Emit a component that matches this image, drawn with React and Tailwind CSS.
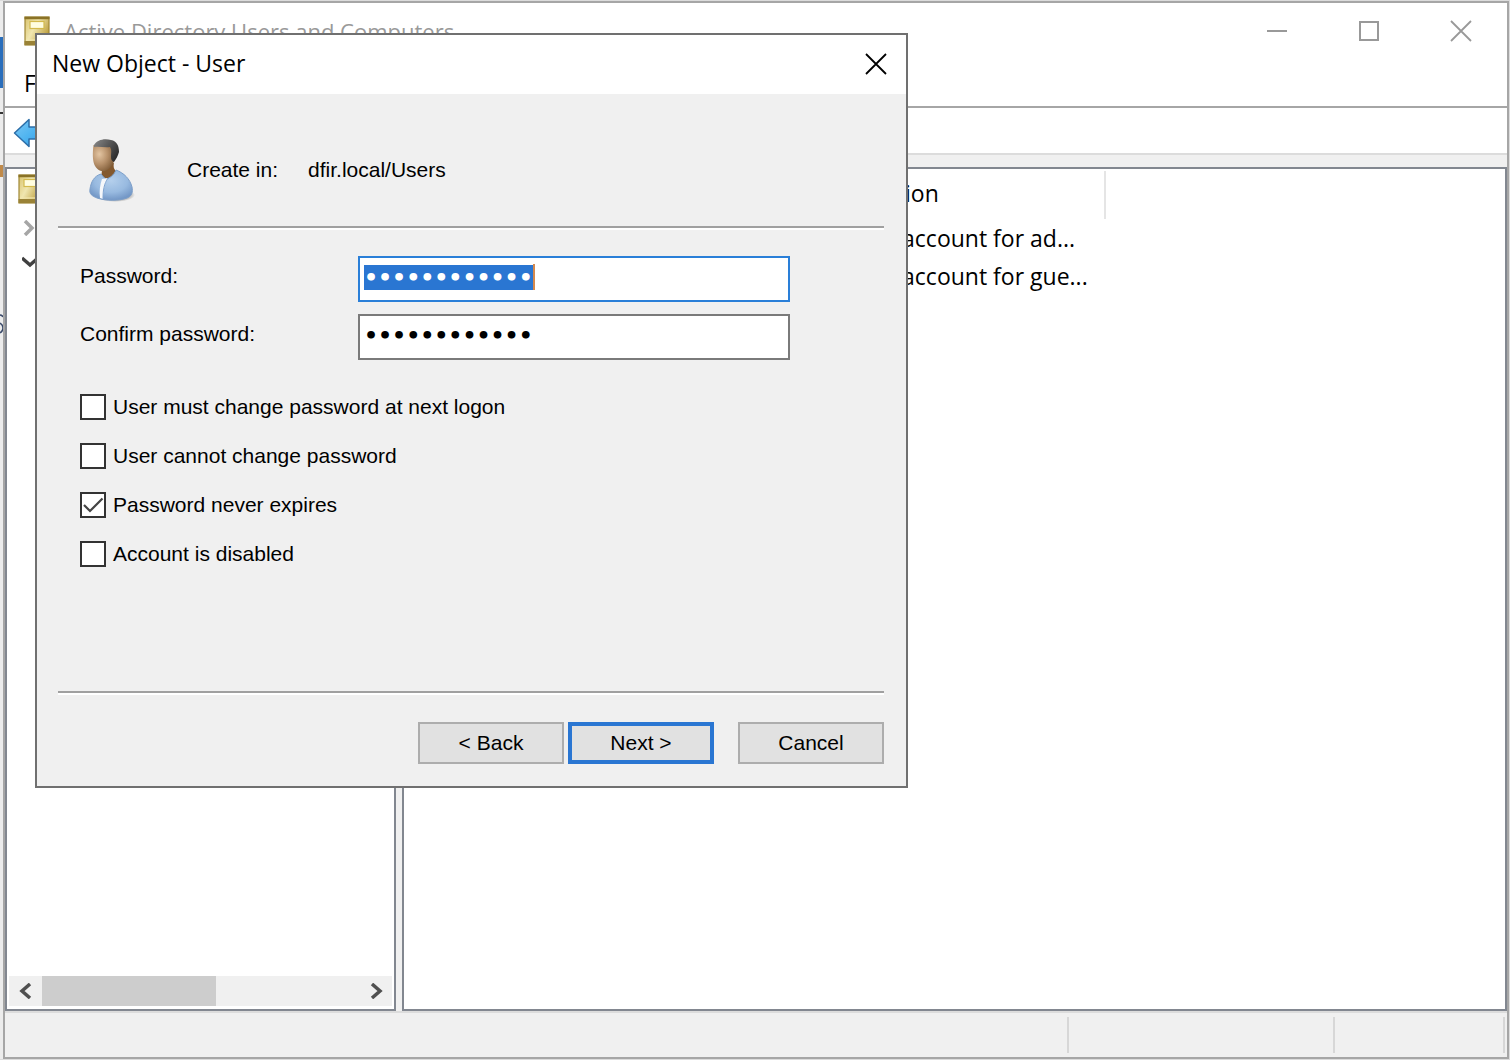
import React, { useEffect, useRef, useState } from 'react';

const OPTIONS = [
  { id: 'must-change', label: 'User must change password at next logon' },
  { id: 'cannot-change', label: 'User cannot change password' },
  { id: 'never-expires', label: 'Password never expires' },
  { id: 'disabled', label: 'Account is disabled' },
];

const ACCOUNTS = ['Built-in account for ad...', 'Built-in account for gue...'];

function BookIcon() {
  return (
    <svg viewBox="0 0 26 30" className="h-[30px] w-[26px] shrink-0" aria-hidden="true">
      <defs>
        <linearGradient id="book" x1="0" y1="0" x2="1" y2="0.6">
          <stop offset="0" stopColor="#d9c36c" />
          <stop offset="0.45" stopColor="#f0e6b0" />
          <stop offset="1" stopColor="#bb9c38" />
        </linearGradient>
      </defs>
      <rect x="1" y="1" width="24" height="28" fill="url(#book)" stroke="#a08836" strokeWidth="1.2" />
      <path d="M0.500 2h25" stroke="#8a7226" strokeWidth="2.500" />
      <path d="M0.500 25h25v4h-25z" fill="#9a8236" />
      <path d="M2 24h22" stroke="#f2e7ae" strokeWidth="1.200" />
      <rect x="6" y="5.500" width="14" height="7" fill="#fffde0" stroke="#d3b94c" strokeWidth="1.200" />
    </svg>
  );
}

function BackIcon() {
  return (
    <svg viewBox="0 0 36 30" className="h-[30px] w-9" aria-hidden="true">
      <defs>
        <linearGradient id="back" x1="0" y1="0" x2="1" y2="1">
          <stop offset="0" stopColor="#7cc8f5" />
          <stop offset="0.5" stopColor="#4fb4f0" />
          <stop offset="1" stopColor="#2f93de" />
        </linearGradient>
      </defs>
      <path d="M1.500 15L16 1.500v7.500h19v12h-19v7.500z" fill="url(#back)" stroke="#2c6ea8" strokeWidth="1.500" strokeLinejoin="round" />
    </svg>
  );
}

function UserIcon() {
  return (
    <svg viewBox="0 0 48 66" className="h-[66px] w-12" aria-hidden="true">
      <defs>
        <radialGradient id="face" cx="0.3" cy="0.35" r="0.75">
          <stop offset="0" stopColor="#e3c5a2" />
          <stop offset="0.5" stopColor="#b8926c" />
          <stop offset="1" stopColor="#7d5a36" />
        </radialGradient>
        <radialGradient id="coat" cx="0.5" cy="0.35" r="0.65">
          <stop offset="0" stopColor="#b4cfec" />
          <stop offset="0.6" stopColor="#98bae0" />
          <stop offset="1" stopColor="#7397c6" />
        </radialGradient>
        <linearGradient id="hair" x1="0" y1="0" x2="1" y2="0.6">
          <stop offset="0" stopColor="#8a8a8a" />
          <stop offset="0.5" stopColor="#5a5a5a" />
          <stop offset="1" stopColor="#2e2e2e" />
        </linearGradient>
        <radialGradient id="shadow">
          <stop offset="0.7" stopColor="#a8a8a8" />
          <stop offset="1" stopColor="#a8a8a8" stopOpacity="0" />
        </radialGradient>
      </defs>
      <ellipse cx="27" cy="58" rx="20" ry="7" fill="url(#shadow)" />
      <path d="M14 28c0 5 0 8-1 11l6 9 11-12c-4-3-5-6-4-10z" fill="#83592f" />
      <path d="M13 37c-7 2-10 8-11 15-1 5 2 7 7 9 9 3 22 3 30 0 5-2 6-6 5-11-2-8-8-14-16-17-2 5-6 8-10 9-2-1-3-3-5-5z" fill="url(#coat)" stroke="#7d9fc9" strokeWidth="1" />
      <path d="M14 42l6-1c-3 5-5 12-5 21l-3-1c-1-7 0-13 2-19z" fill="#f5f7fa" />
      <path d="M20 41c-4 6-5 12-5 21" fill="none" stroke="#7ea3d0" strokeWidth="1" />
      <path d="M5.500 8c-1 8-1 15 1 20 2 4 6 7 10 6 5-1 9-6 10-12V8z" fill="url(#face)" />
      <path d="M6 8C9 3 16 1 23 3c6 1 8 6 8 12-1 4-3 7-5 10-2-1-3-2-3-5 0-4 1-7-1-10-5 1-11-1-16 0z" fill="url(#hair)" />
    </svg>
  );
}

function CloseIcon() {
  return (
    <svg viewBox="0 0 24 24" className="size-6" fill="none" stroke="currentColor" strokeWidth="1.800" aria-hidden="true">
      <path d="M2 2l20 20M22 2L2 22" />
    </svg>
  );
}

function Chevron({ d, className }) {
  return (
    <svg viewBox="0 0 16 16" className={`size-4 ${className}`} fill="none" stroke="currentColor" strokeWidth="3.500" aria-hidden="true">
      <path d={d} />
    </svg>
  );
}

function TitleBar() {
  return (
    <header className="flex h-14 shrink-0 items-center pl-[19px]">
      <BookIcon />
      <h1 className="ml-3.5 flex-1 text-[22px] text-[#999]">Active Directory Users and Computers</h1>
      <div className="flex text-[#999]">
        <button type="button" aria-label="Minimize" className="flex h-14 w-[92px] items-center justify-center">
          <span className="h-0.5 w-5 bg-[#999]" />
        </button>
        <button type="button" aria-label="Maximize" className="flex h-14 w-[92px] items-center justify-center">
          <span className="size-5 border-2 border-[#999]" />
        </button>
        <button type="button" aria-label="Close" className="flex h-14 w-[92px] items-center justify-center">
          <CloseIcon />
        </button>
      </div>
    </header>
  );
}

function TreePane() {
  return (
    <aside className="flex w-[391px] shrink-0 flex-col border-2 border-[#828790] bg-white">
      <div className="flex flex-1 flex-col pl-[11px] pt-[5px]">
        <BookIcon />
        <div className="mt-4 flex flex-col gap-[18px] pl-1">
          <Chevron d="M3 1l7 7-7 7" className="text-[#a6a6a6]" />
          <Chevron d="M0 4l8 7 8-7" className="text-[#404040]" />
        </div>
      </div>
      <div className="mx-0.5 mb-[3px] flex h-[30px] items-center bg-[#f0f0f0]">
        <button type="button" aria-label="Scroll left" className="flex h-full w-[33px] items-center justify-center">
          <Chevron d="M12 1L4 8l8 7" className="text-[#505050]" />
        </button>
        <div className="h-full flex-1">
          <div className="h-full w-[174px] bg-[#cdcdcd]" />
        </div>
        <button type="button" aria-label="Scroll right" className="flex h-full w-[33px] items-center justify-center">
          <Chevron d="M4 1l8 7-8 7" className="text-[#505050]" />
        </button>
      </div>
    </aside>
  );
}

function ListPane() {
  return (
    <section className="min-w-0 flex-1 border-2 border-[#828790] bg-white pt-0.5">
      <table className="table-fixed border-collapse text-left text-[23px]">
        <thead>
          <tr className="h-[48px]">
            <th className="w-[412px]" />
            <th className="w-[289px] border-r-2 border-[#e5e5e5] pb-1 font-normal">Description</th>
          </tr>
        </thead>
        <tbody>
          {ACCOUNTS.map((text) => (
            <tr key={text} className="h-[38px]">
              <td />
              <td className="whitespace-nowrap pl-1">{text}</td>
            </tr>
          ))}
        </tbody>
      </table>
    </section>
  );
}

function PasswordRow({ id, label, value, onChange, inputRef, active }) {
  return (
    <div className="flex">
      <label htmlFor={id} className="w-[278px] pt-1.5 leading-7">{label}</label>
      <div className="relative">
        <input
          id={id}
          ref={inputRef}
          type="password"
          value={value}
          onChange={(e) => onChange(e.target.value)}
          className={`block h-[46px] w-[432px] border-2 bg-white pb-2.5 pl-1 pt-1.5 font-['DejaVu_Sans'] text-[22px] font-bold leading-[26px] outline-none selection:bg-[#2a76d2] selection:text-white ${active ? 'border-[#2a7fd8]' : 'border-[#7a7a7a]'}`}
        />
        {active && <span className="absolute left-[175px] top-2 h-[26px] w-0.5 bg-[#d5894d]" />}
      </div>
    </div>
  );
}

function NewUserDialog() {
  const [password, setPassword] = useState('Passw0rd!234');
  const [confirm, setConfirm] = useState('Passw0rd!234');
  const [checked, setChecked] = useState({ 'never-expires': true });
  const passwordRef = useRef(null);

  useEffect(() => {
    passwordRef.current.focus();
    passwordRef.current.select();
  }, []);

  return (
    <div role="dialog" aria-labelledby="dialog-title" className="absolute left-[35px] top-[33px] w-[873px] border-2 border-[#707070] bg-[#f0f0f0] text-black">
      <div className="flex h-[59px] items-center justify-between bg-white pb-0.5 pl-[15px] pr-[18px]">
        <h2 id="dialog-title" className="text-[23px]">New Object - User</h2>
        <button type="button" aria-label="Close"><CloseIcon /></button>
      </div>

      <form onSubmit={(e) => e.preventDefault()} className="flex flex-col pb-[22px] pl-[21px] pr-[22px] font-['Liberation_Sans',sans-serif] text-[21px]">
        <div className="flex h-[132px] items-center pl-[30px] pt-5">
          <UserIcon />
          <div className="ml-[51px] flex gap-[30px] leading-7">
            <span>Create in:</span>
            <span>dfir.local/Users</span>
          </div>
        </div>
        <div className="h-1 border-b-2 border-t-2 border-b-white border-t-[#a0a0a0]" />

        <div className="flex flex-col gap-3 pl-[22px] pt-[26px]">
          <PasswordRow id="password" label="Password:" value={password} onChange={setPassword} inputRef={passwordRef} active />
          <PasswordRow id="confirm" label="Confirm password:" value={confirm} onChange={setConfirm} />
        </div>

        <div className="mt-[33px] flex h-[298px] flex-col gap-[21px] pl-[22px]">
          {OPTIONS.map(({ id, label }) => (
            <div key={id} className="flex h-7 items-center gap-[7px] leading-7">
              <span className="grid size-[26px] place-items-center">
                <input
                  id={id}
                  type="checkbox"
                  checked={!!checked[id]}
                  onChange={(e) => setChecked({ ...checked, [id]: e.target.checked })}
                  className="peer col-start-1 row-start-1 size-[26px] appearance-none border-2 border-[#333] bg-white"
                />
                <svg viewBox="0 0 26 26" className="pointer-events-none invisible col-start-1 row-start-1 size-[26px] peer-checked:visible" fill="none" stroke="#444" strokeWidth="2.200" aria-hidden="true">
                  <path d="M4 13l6 6L22.500 6.500" />
                </svg>
              </span>
              <label htmlFor={id}>{label}</label>
            </div>
          ))}
        </div>

        <div className="h-1 border-b-2 border-t-2 border-b-white border-t-[#a0a0a0]" />
        <div className="mt-[27px] flex justify-end">
          <button type="button" className="h-[42px] w-[146px] border-2 border-[#adadad] bg-[#e1e1e1]">&lt; Back</button>
          <button type="submit" className="ml-1 h-[42px] w-[146px] border-4 border-[#2a76d2] bg-[#e1e1e1]">Next &gt;</button>
          <button type="button" className="ml-6 h-[42px] w-[146px] border-2 border-[#adadad] bg-[#e1e1e1]">Cancel</button>
        </div>
      </form>
    </div>
  );
}

export default function App() {
  return (
    <div className="relative flex h-screen overflow-hidden bg-[#dcdcdc] py-px pr-px font-['Open_Sans',sans-serif] text-black">
      {/* sliver of the window behind */}
      <div className="flex w-[3px] shrink-0 flex-col bg-[#ececec]">
        <div className="mt-9 h-[51px] bg-[#2a6ebb]" />
        <div className="mt-6 h-0.5 bg-[#333]" />
        <div className="mt-[51px] h-3 bg-[#c08a4a]" />
        <svg viewBox="0 0 3 20" className="mt-[137px] h-5 w-[3px]" fill="none" stroke="#3a4a6a" strokeWidth="1.500" aria-hidden="true">
          <path d="M0 1q2 0 3 2M0 9q3 2 3 5t-3 5" />
        </svg>
      </div>

      <main className="flex min-w-0 flex-1 flex-col border-2 border-[#a6a6a6] bg-white">
        <TitleBar />
        <nav className="flex h-[49px] shrink-0 items-center border-b-2 border-[#a6a6a6] pl-[19px] pt-0.5 text-[23px]">
          <button type="button">File</button>
        </nav>
        <div className="flex h-[45px] shrink-0 items-center pl-2 pt-1">
          <button type="button" aria-label="Back"><BackIcon /></button>
        </div>
        <div className="flex min-h-0 flex-1 gap-1.5 border-t-2 border-[#dcdcdc] bg-[#f0f0f0] pt-3">
          <TreePane />
          <ListPane />
        </div>
        <footer className="flex h-[46px] shrink-0 justify-end border-t-2 border-[#dcdcdc] bg-[#f0f0f0] py-1 pr-0.5">
          <div className="w-[266px] border-l-2 border-[#d7d7d7]" />
          <div className="w-[172px] border-x-2 border-[#d7d7d7]" />
        </footer>
      </main>

      <NewUserDialog />
    </div>
  );
}
